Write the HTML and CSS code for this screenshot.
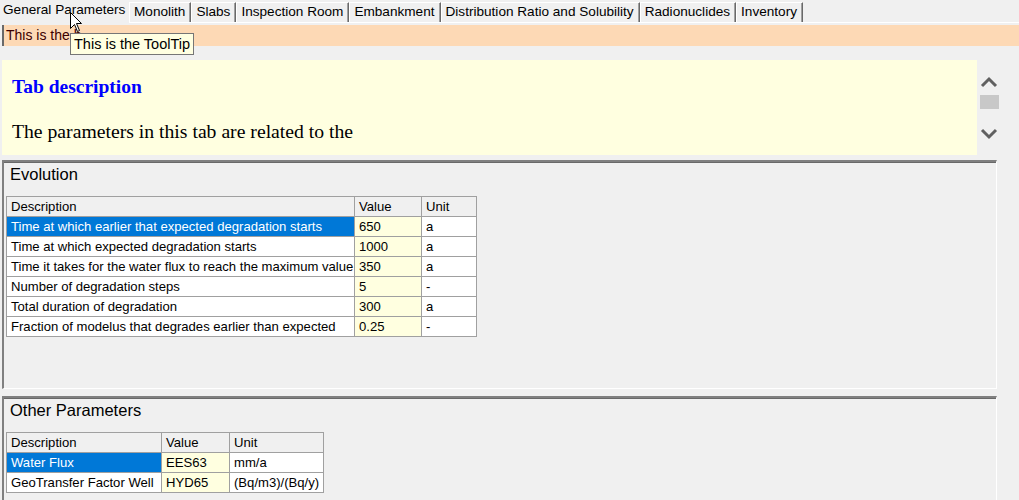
FILE: index.html
```html
<!DOCTYPE html>
<html>
<head>
<meta charset="utf-8">
<link rel="stylesheet" href="styles.css">
</head>
<body>
<div class="app">
  <div class="tabbar">
    <div class="tab selected">General Parameters</div>
    <div class="tab">Monolith</div>
    <div class="tab">Slabs</div>
    <div class="tab">Inspection Room</div>
    <div class="tab">Embankment</div>
    <div class="tab">Distribution Ratio and Solubility</div>
    <div class="tab">Radionuclides</div>
    <div class="tab">Inventory</div>
  </div>
  <div class="hintbar">This is the h</div>
  <div class="descrow">
    <div class="desc">
      <h2 class="desc-title">Tab description</h2>
      <p class="desc-text">The parameters in this tab are related to the</p>
    </div>
    <div class="scroller">
      <svg class="chev" width="18" height="12" viewBox="0 0 18 12"><path d="M2 10 L9 3 L16 10" fill="none" stroke="#606060" stroke-width="3"/></svg>
      <div class="thumb"></div>
      <svg class="chev" width="18" height="12" viewBox="0 0 18 12"><path d="M2 2 L9 9 L16 2" fill="none" stroke="#606060" stroke-width="3"/></svg>
    </div>
  </div>
  <div class="group evolution">
    <div class="group-title">Evolution</div>
    <table class="grid grid-evo">
      <colgroup><col class="c1"><col class="c2"><col class="c3"></colgroup>
      <tr class="head"><td>Description</td><td>Value</td><td>Unit</td></tr>
      <tr><td class="sel">Time at which earlier that expected degradation starts</td><td class="val">650</td><td>a</td></tr>
      <tr><td>Time at which expected degradation starts</td><td class="val">1000</td><td>a</td></tr>
      <tr><td>Time it takes for the water flux to reach the maximum value</td><td class="val">350</td><td>a</td></tr>
      <tr><td>Number of degradation steps</td><td class="val">5</td><td>-</td></tr>
      <tr><td>Total duration of degradation</td><td class="val">300</td><td>a</td></tr>
      <tr><td>Fraction of modelus that degrades earlier than expected</td><td class="val">0.25</td><td>-</td></tr>
    </table>
  </div>
  <div class="group other">
    <div class="group-title">Other Parameters</div>
    <table class="grid grid-other">
      <colgroup><col class="c1"><col class="c2"><col class="c3"></colgroup>
      <tr class="head"><td>Description</td><td>Value</td><td>Unit</td></tr>
      <tr><td class="sel">Water Flux</td><td class="val">EES63</td><td>mm/a</td></tr>
      <tr><td>GeoTransfer Factor Well</td><td class="val">HYD65</td><td>(Bq/m3)/(Bq/y)</td></tr>
    </table>
  </div>
</div>
<div class="tooltip">This is the ToolTip</div>
<svg class="cursor" width="13" height="21" viewBox="0 0 13 21"><path d="M0.5 0.5 L0.5 16.5 L4.5 12.5 L7.5 19.5 L9.5 18.5 L6.5 11.5 L11.5 11.5 Z" fill="#fff" stroke="#000" stroke-width="1"/></svg>
</body>
</html>
```
FILE: styles.css
```css
html, body {
  margin: 0;
  padding: 0;
  background: #f0f0f0;
  width: 1019px;
  height: 500px;
  overflow: hidden;
  font-family: "Liberation Sans", Arial, sans-serif;
  color: #000;
}
.app {
  display: flex;
  flex-direction: column;
}
.tabbar {
  display: flex;
  height: 23px;
  border-bottom: 1px solid #fff;
  box-sizing: border-box;
  align-items: flex-end;
}
.tab {
  font-size: 13.6px;
  height: 20px;
  line-height: 18px;
  padding: 0 5px 0 4px;
  box-sizing: border-box;
  border-top: 1px solid #fff;
  border-left: 1px solid #fff;
  border-right: 1px solid #696969;
  box-shadow: inset -1px 0 0 #a0a0a0;
  white-space: nowrap;
}
.tab.selected {
  line-height: 21px;
  padding: 0 0 0 3px;
  border: none;
  box-shadow: none;
  width: 129px;
  background: #f0f0f0;
  margin-bottom: -1px;
  height: 24px;
}
.hintbar {
  margin: 2px 0 0 2px;
  height: 21px;
  background: #fdd9b5;
  border-left: 2px solid #696969;
  font-size: 14px;
  line-height: 20px;
  padding-left: 2px;
  color: #3c0000;
}
.descrow {
  display: flex;
  margin-top: 14px;
  margin-left: 2px;
  height: 95px;
}
.desc {
  width: 975px;
  background: #ffffe0;
  box-sizing: border-box;
  padding: 14px 0 0 10px;
  font-family: "Liberation Serif", "Times New Roman", serif;
}
.desc-title {
  margin: 0;
  font-size: 19.5px;
  font-weight: bold;
  color: #0000ff;
  line-height: 26px;
}
.desc-text {
  margin: 18px 0 0 0;
  font-size: 19.7px;
  line-height: 26px;
}
.scroller {
  width: 20px;
  margin-left: 2px;
  display: flex;
  flex-direction: column;
  align-items: center;
  padding-top: 16px;
}
.chev { display: block; }
.thumb {
  width: 19px;
  height: 14px;
  background: #c8c8c8;
  margin: 7px 0 19px 0;
}
.group {
  margin-left: 2px;
  width: 995px;
  box-sizing: border-box;
  border-top: 2px solid #808080;
  border-left: 2px solid #808080;
  border-right: 1px solid #fff;
  border-bottom: 1px solid #fff;
  box-shadow: inset 0 1px 0 #696969;
  padding: 3px 0 0 2px;
}
.evolution {
  margin-top: 5px;
  height: 229px;
}
.other {
  margin-top: 7px;
  height: 110px;
}
.group-title {
  font-size: 16.5px;
  line-height: 18px;
  padding-left: 4px;
  height: 31px;
}
.grid {
  border-collapse: collapse;
  table-layout: fixed;
  font-size: 13.1px;
  background: #fff;
  border: 1px solid #a0a0a0;
}
.grid td {
  border: 1px solid #a0a0a0;
  height: 20px;
  padding: 0 0 0 4px;
  line-height: 18px;
  white-space: nowrap;
  overflow: hidden;
  box-sizing: border-box;
}
.grid .head td {
  background: #f0f0f0;
}
.grid td.sel {
  background: #0078d7;
  color: #fff;
}
.grid td.val {
  background: #ffffe0;
}
.grid-evo { width: 470px; }
.grid-evo .c1 { width: 348px; }
.grid-evo .c2 { width: 67px; }
.grid-evo .c3 { width: 55px; }
.grid-other { width: 317px; }
.grid-other .c1 { width: 155px; }
.grid-other .c2 { width: 68px; }
.grid-other .c3 { width: 94px; }
.tooltip {
  position: absolute;
  left: 70px;
  top: 33px;
  width: 124px;
  height: 22px;
  box-sizing: border-box;
  background: #ffffe1;
  border: 1px solid #767676;
  font-size: 14.5px;
  line-height: 20px;
  padding-left: 3px;
  white-space: nowrap;
}
.cursor {
  position: absolute;
  left: 70px;
  top: 12px;
}
```
